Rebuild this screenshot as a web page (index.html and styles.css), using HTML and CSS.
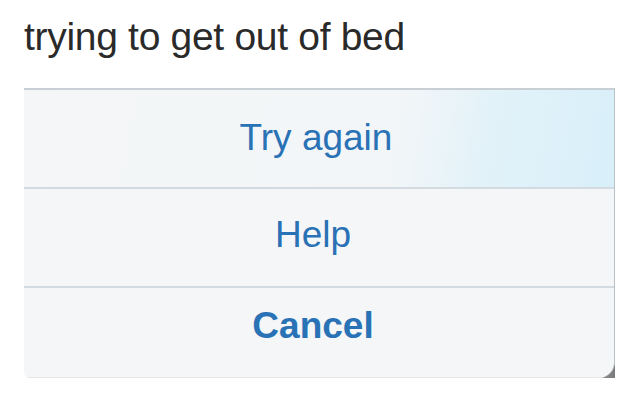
FILE: index.html
```html
<!DOCTYPE html>
<html lang="en">

<head>
    <meta charset="UTF-8">
    <meta name="viewport" content="width=device-width, initial-scale=1.0">
    <title>trying to get out of bed</title>
    <link rel="stylesheet" href="styles.css">
</head>

<body>

    <h1 class="caption">trying to get out of bed</h1>

    <div class="sheet-frame">
        <div class="sheet">
            <div class="sheet-row sheet-row-first">Try again</div>
            <div class="sheet-row">Help</div>
            <div class="sheet-row sheet-row-cancel">Cancel</div>
        </div>
    </div>

</body>

</html>
```

FILE: styles.css
```css
* {
    box-sizing: border-box;
}

body {
    margin: 0;
    background-color: #ffffff;
    font-family: "Liberation Sans", Arial, sans-serif;
    width: 629px;
    height: 404px;
    overflow: hidden;
}

.caption {
    margin: 0;
    padding: 14px 0 0 24px;
    font-size: 39px;
    font-weight: 300;
    line-height: 46px;
    color: #2a2a2a;
    letter-spacing: -0.3px;
}

.sheet-frame {
    margin: 28px 0 0 24px;
    width: 591px;
    background: linear-gradient(to right, #ffffff 0%, #ffffff 85%, #7a7a7a 100%);
    border-bottom-left-radius: 4px;
}

.sheet {
    background-color: #f5f6f7;
    border-top: 2px solid #c9d0d5;
    border-right: 1px solid #b8c2c8;
    border-bottom-left-radius: 6px;
    border-bottom-right-radius: 16px;
    overflow: hidden;
}

.sheet-row {
    display: flex;
    justify-content: center;
    align-items: center;
    height: 99px;
    border-bottom: 2px solid #d3dae0;
    font-size: 37px;
    color: #2a72b6;
    padding: 0 12px 6px 0;
}

.sheet-row-first {
    background: linear-gradient(100deg, #f4f6f7 0%, #f3f6f8 62%, #e2f2f9 78%, #d8eff9 100%);
    padding: 0 6px 2px 0;
}

.sheet-row-cancel {
    height: 90px;
    padding-bottom: 14px;
    border-bottom: 1px solid #e4e7ea;
    font-weight: bold;
}
```
